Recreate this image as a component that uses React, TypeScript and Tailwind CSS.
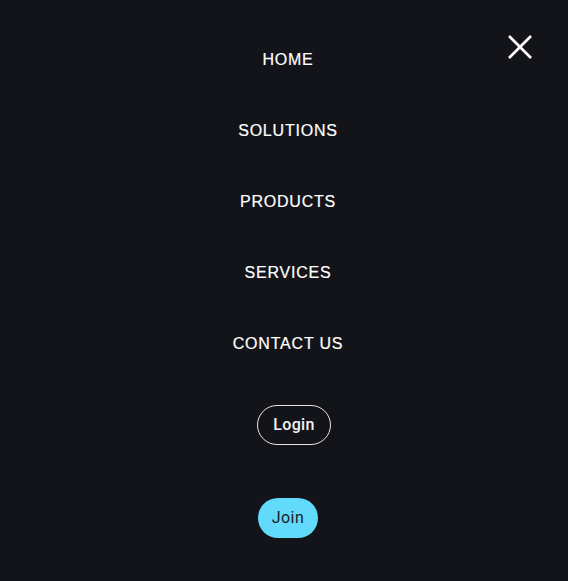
const NAV_ITEMS = ['HOME', 'SOLUTIONS', 'PRODUCTS', 'SERVICES', 'CONTACT US']

function CloseIcon() {
  return (
    <svg width="24" height="24" viewBox="0 0 24 24" fill="none" stroke="currentColor" strokeWidth="2.6" strokeLinecap="butt">
      <line x1="1" y1="1" x2="23" y2="23" />
      <line x1="23" y1="1" x2="1" y2="23" />
    </svg>
  )
}

export default function App() {
  return (
    <div className="relative min-h-[581px] w-full bg-[#131419] text-white">

      {/* Close button */}
      <button className="absolute left-[508px] top-[35px] text-white">
        <CloseIcon />
      </button>

      <nav className="flex flex-col items-center pt-[48px] pl-[8px]">
        <ul className="flex flex-col items-center gap-[47px]">
          {NAV_ITEMS.map((item) => (
            <li
              key={item}
              className="text-[16px] leading-[24px] tracking-[0.05em] font-['Liberation_Sans',Arial,sans-serif] [-webkit-text-stroke:0.2px_white]"
            >
              {item}
            </li>
          ))}
        </ul>

        <button className="mt-[49px] ml-[12px] h-[40px] px-[15px] rounded-full border border-[#e6e6e6] text-[16px] font-medium tracking-[0.02em] text-[#f2f2f2] font-['Roboto',sans-serif]">
          Login
        </button>

        <button className="mt-[53px] h-[40px] px-[14px] rounded-full bg-[#61dafb] text-[16px] tracking-[0.03em] text-[#1b1c24] font-['Roboto',sans-serif]">
          Join
        </button>
      </nav>
    </div>
  )
}
